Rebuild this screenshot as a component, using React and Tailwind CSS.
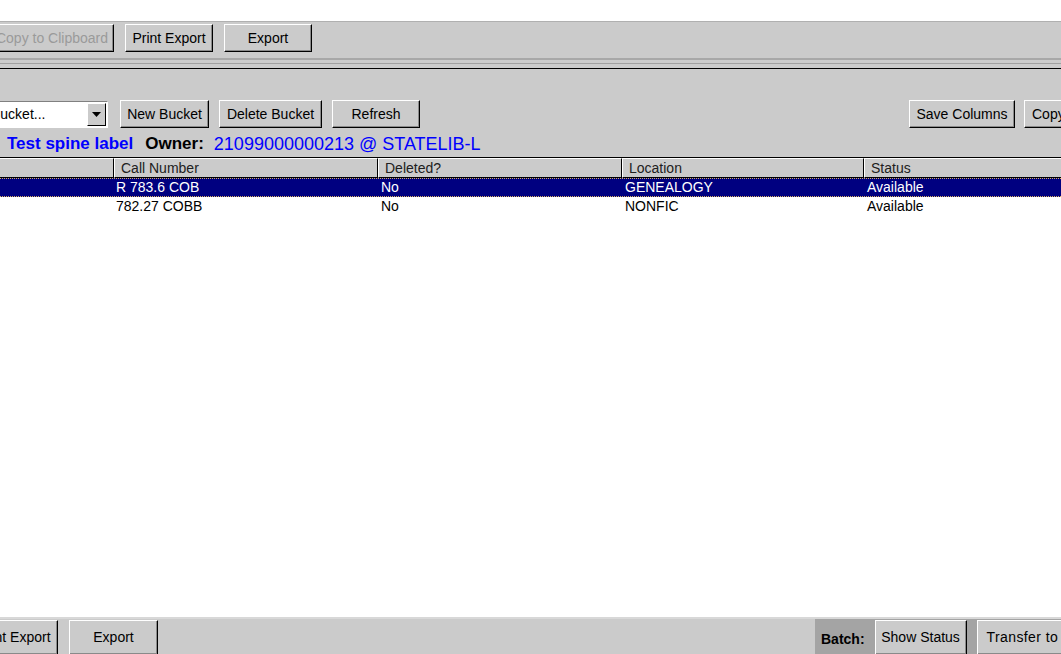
import React from 'react';

const font = "font-['Liberation_Sans',Arial,sans-serif]";

function Btn({ children, className = '', disabled }) {
  return (
    <div
      className={`h-[28px] shrink-0 bg-[#cbcbcb] border border-t-white border-l-white border-r-black border-b-black shadow-[inset_-1px_-1px_#8a8a8a] flex items-center justify-center text-[14px] whitespace-nowrap ${disabled ? 'text-[#9a9a9a]' : 'text-black'} ${className}`}
    >
      {children}
    </div>
  );
}

function HeaderCell({ children, className = '' }) {
  return (
    <div className={`h-full shrink-0 bg-[#cbcbcb] border border-t-white border-l-white border-r-black border-b-black flex items-center pl-[6px] text-[14px] text-[#202020] whitespace-nowrap ${className}`}>
      {children}
    </div>
  );
}

const rows = [
  { call: 'R 783.6 COB', deleted: 'No', location: 'GENEALOGY', status: 'Available', selected: true },
  { call: '782.27 COBB', deleted: 'No', location: 'NONFIC', status: 'Available' },
];

export default function App() {
  return (
    <div className={`w-[1061px] h-[654px] bg-white overflow-hidden flex flex-col ${font}`}>
      <div className="h-[21px] shrink-0 bg-white" />

      {/* Top toolbar */}
      <div className="h-[37px] shrink-0 bg-[#cbcbcb] border-t border-[#b0b0b0] flex items-start pt-[2px] gap-[11px]">
        <Btn disabled className="w-[124px] -ml-[10px]">Copy to Clipboard</Btn>
        <Btn className="w-[88px]">Print Export</Btn>
        <Btn className="w-[88px]">Export</Btn>
      </div>

      {/* separators */}
      <div className="h-[11px] shrink-0 bg-[#cbcbcb] flex flex-col">
        <div className="h-[2px] bg-[#a8a8a8]" />
        <div className="h-[3px]" />
        <div className="h-[1px] bg-[#a0a0a0]" />
        <div className="h-[4px]" />
        <div className="h-[1px] bg-black" />
      </div>

      {/* Bucket area */}
      <div className="h-[88px] shrink-0 bg-[#cbcbcb] flex flex-col">
        <div className="flex items-center mt-[31px] h-[28px]">
          <div className="w-[140px] -ml-[32px] h-[27px] mt-[1px] shrink-0 bg-white border border-t-[#808080] border-l-[#808080] border-r-white border-b-white flex items-center overflow-hidden">
            <div className="flex-1 pl-[22px] text-[14px] text-black whitespace-nowrap">Bucket...</div>
            <div className="w-[19px] h-[23px] bg-[#cbcbcb] border border-t-white border-l-white border-r-black border-b-black flex items-center justify-center mr-[1px]">
              <svg width="9" height="5" viewBox="0 0 9 5"><path d="M0 0H9L4.5 5Z" fill="black" /></svg>
            </div>
          </div>
          <Btn className="w-[89px] ml-[12px]">New Bucket</Btn>
          <Btn className="w-[103px] ml-[10px]">Delete Bucket</Btn>
          <Btn className="w-[88px] ml-[10px]">Refresh</Btn>
          <div className="flex-1" />
          <Btn className="w-[106px]">Save Columns</Btn>
          <Btn className="w-[60px] ml-[9px] -mr-[23px] justify-start pl-[7px]">Copy</Btn>
        </div>
        <div className="flex items-center h-[22px] mt-[5px] whitespace-nowrap">
          <span className="ml-[7px] text-[17px] font-bold text-[#0000ff]">Test spine label</span>
          <span className="ml-[12px] text-[17px] font-bold text-black">Owner:</span>
          <span className="ml-[10px] text-[18px] text-[#0000ff]">21099000000213 @ STATELIB-L</span>
        </div>
      </div>

      {/* Table header */}
      <div className="h-[21px] shrink-0 flex bg-[#cbcbcb] border-t border-black">
        <HeaderCell className="w-[124px] -ml-[10px]" />
        <HeaderCell className="w-[264px]">Call Number</HeaderCell>
        <HeaderCell className="w-[244px]">Deleted?</HeaderCell>
        <HeaderCell className="w-[242px]">Location</HeaderCell>
        <HeaderCell className="w-[260px]">Status</HeaderCell>
      </div>

      {/* Rows */}
      <div className="flex-1 bg-white flex flex-col">
        {rows.map((r) => (
          <div
            key={r.call}
            className={`h-[19px] flex items-center text-[14px] whitespace-nowrap ${r.selected ? 'bg-[#000080] text-white border-y border-dotted border-[#d8b060]' : 'bg-white text-black'}`}
          >
            <div className="w-[116px] shrink-0" />
            <div className="w-[265px] shrink-0">{r.call}</div>
            <div className="w-[244px] shrink-0">{r.deleted}</div>
            <div className="w-[242px] shrink-0">{r.location}</div>
            <div className="flex-1">{r.status}</div>
          </div>
        ))}
      </div>

      {/* Bottom toolbar */}
      <div className="h-[37px] shrink-0 bg-[#cbcbcb] border-t-2 border-[#d8d8d8] flex items-start">
        <div className="flex items-start gap-[11px] pt-[1px]">
          <Btn className="w-[88px] -ml-[30px] h-[35px]">Print Export</Btn>
          <Btn className="w-[89px] h-[35px]">Export</Btn>
        </div>
        <div className="flex-1" />
        <div className="w-[246px] h-full bg-[#a4a4a4] flex items-start pt-[1px]">
          <span className="ml-[6px] mt-[9px] text-[14px] font-bold text-black">Batch:</span>
          <Btn className="w-[92px] ml-[10px] h-[35px]">Show Status</Btn>
          <Btn className="w-[100px] ml-[10px] h-[35px] justify-start pl-[9px] tracking-[0.4px]">Transfer to</Btn>
        </div>
      </div>
    </div>
  );
}
